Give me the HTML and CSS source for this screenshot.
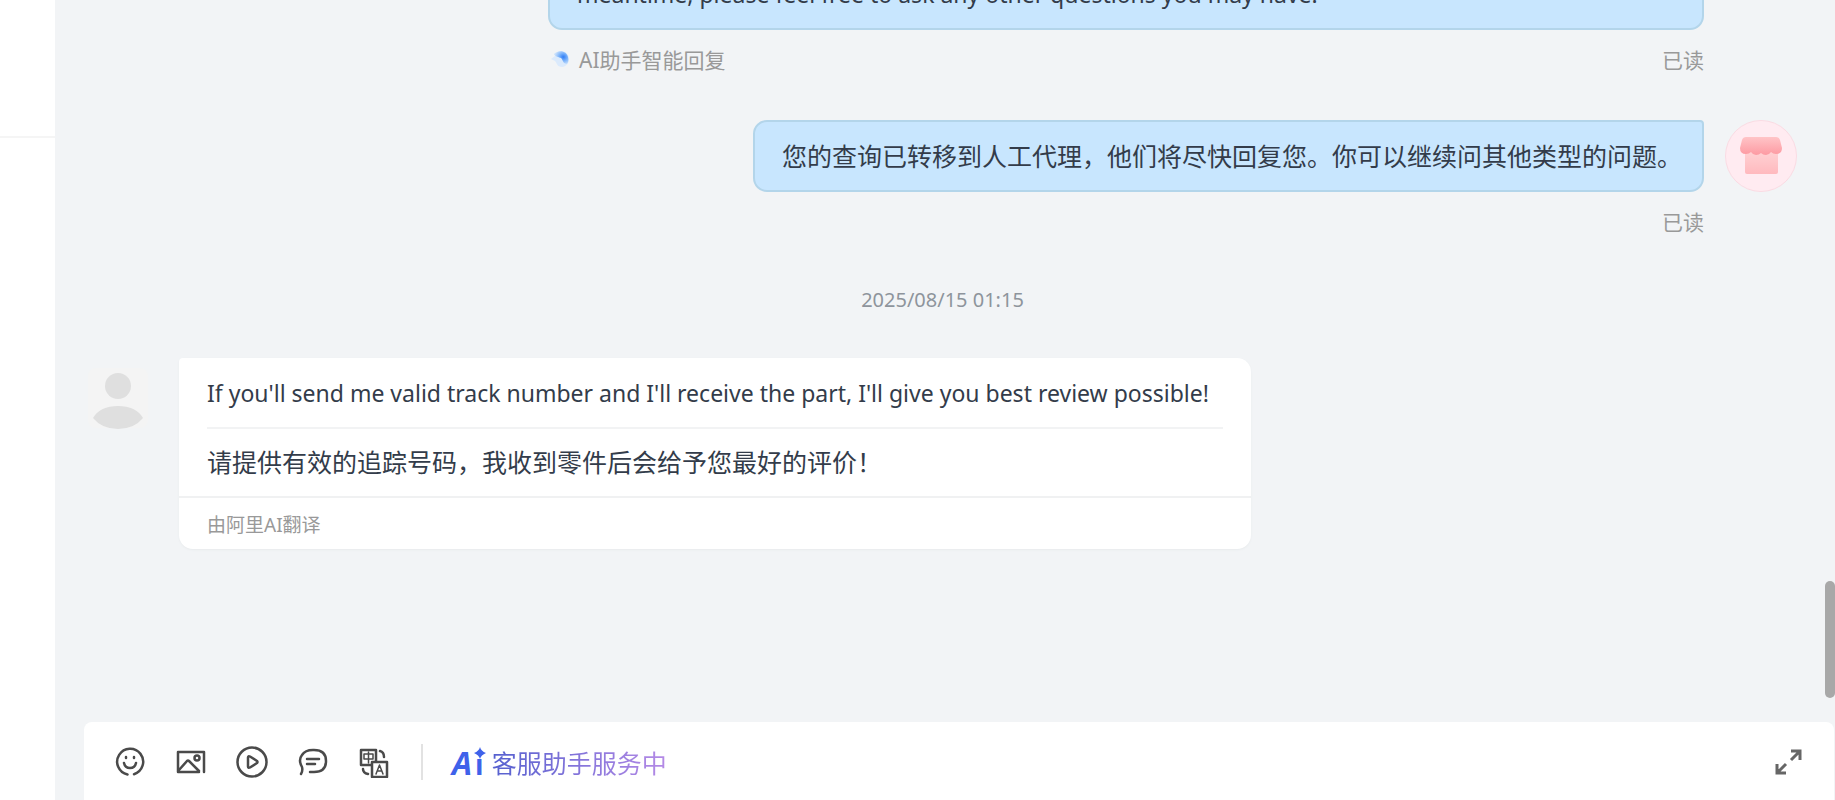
FILE: index.html
```html
<!DOCTYPE html>
<html lang="zh-CN">
<head>
	<meta charset="utf-8">
	<title>客服消息</title>
	<link rel="stylesheet" href="styles.css">
</head>
<body>
	<aside class="sidebar">
		<div class="sidebar_top"></div>
	</aside>

	<main class="chat">
		<section class="messages">
			<div class="msg_out">
				<div class="out_body">
					<div class="bubble bubble_long">meantime, please feel free to ask any other questions you may have.</div>
					<div class="meta">
						<span class="ai_tag">
							<svg class="ai_dot" viewBox="0 0 20 20" aria-hidden="true">
								<defs>
									<radialGradient id="dot" cx="0.65" cy="0.45" r="0.6">
										<stop offset="0" stop-color="#2f7df6"/>
										<stop offset="0.5" stop-color="#7db4fb"/>
										<stop offset="1" stop-color="#c9e0fc"/>
									</radialGradient>
								</defs>
								<path d="M0 10l4-3c0-3 3-5 6-5 5 0 8 4 8 8s-3 8-7 8c-5 0-5-4-7-6z" fill="#dbeafc"/>
								<path d="M3 5c5-5 13-3 14 3 1 3 0 6-1 7-4 0-4-4-6-6-2-1-6-1-7-4z" fill="url(#dot)"/>
							</svg>
							AI助手智能回复
						</span>
						<span class="read">已读</span>
					</div>
				</div>
				<div class="avatar_gap"></div>
			</div>

			<div class="msg_out msg_next">
				<div class="out_body">
					<div class="bubble">您的查询已转移到人工代理，他们将尽快回复您。你可以继续问其他类型的问题。</div>
					<div class="meta"><span class="read">已读</span></div>
				</div>
				<svg class="shop" viewBox="0 0 72 72" aria-label="店铺">
					<defs>
						<linearGradient id="roof" x1="0" y1="0" x2="0" y2="1">
							<stop offset="0" stop-color="#ffc4c7"/>
							<stop offset="1" stop-color="#fd9aa2"/>
						</linearGradient>
						<linearGradient id="wall" x1="0" y1="0" x2="0" y2="1">
							<stop offset="0" stop-color="#ffd3d5"/>
							<stop offset="1" stop-color="#ffb9be"/>
						</linearGradient>
					</defs>
					<circle cx="36" cy="36" r="35.5" fill="#ffebf1" stroke="#fadbe3"/>
					<path d="M20 30h33v22q0 2-2 2H22q-2 0-2-2z" fill="url(#wall)"/>
					<path d="M21 17h30q3 0 4 3l2 8q0 6-6 6-3 0-5-2-2 3-5 3-3 0-5-2-2 2-5 2-3 0-5-3-2 2-5 2-6 0-6-6l2-8q1-3 4-3z" fill="url(#roof)"/>
				</svg>
			</div>

			<div class="time">2025/08/15 01:15</div>

			<div class="msg_in">
				<svg class="person" viewBox="0 0 60 60" aria-label="买家">
					<rect width="60" height="60" rx="8" fill="#f4f4f4"/>
					<circle cx="30" cy="18" r="13" fill="#dfdfdf"/>
					<path d="M5 50Q12 38 30 38T55 50Q46 61 30 61T5 50z" fill="#dfdfdf"/>
				</svg>
				<div class="card">
					<p class="line original">If you'll send me valid track number and I'll receive the part, I'll give you best review possible!</p>
					<p class="line translated">请提供有效的追踪号码，我收到零件后会给予您最好的评价！</p>
					<p class="source">由阿里AI翻译</p>
				</div>
			</div>
			<div class="thumb"></div>
		</section>

		<footer class="composer">
			<button type="button" class="tool" aria-label="表情">
				<svg viewBox="0 0 32 32"><path d="M13.500 28.500A13 13 0 1 1 20 28.200M10 17q1 5 6 5t6-5M12 11v1M20 11v1"/></svg>
			</button>
			<button type="button" class="tool" aria-label="图片">
				<svg viewBox="0 0 32 32"><path d="M29 26V6H3v20h21M4 24l8-9q1-1 2 0l10 10"/><circle cx="22" cy="12" r="2.500"/></svg>
			</button>
			<button type="button" class="tool" aria-label="视频">
				<svg viewBox="0 0 32 32"><circle cx="16" cy="16" r="14.500"/><path d="M12 11.500v9q0 2 2 1l7-4.500q1-1 0-2l-7-4.500q-2-1-2 1z"/></svg>
			</button>
			<button type="button" class="tool" aria-label="快捷短语">
				<svg viewBox="0 0 32 32"><path d="M4 28q2-3 1-7-4-7 0-12 3-5 11-5h1q12 0 12 11T17 26h-4M10 13h12M10 18h8"/></svg>
			</button>
			<button type="button" class="tool" aria-label="翻译">
				<svg viewBox="0 0 32 32"><path d="M13 19H3V4h15v11M14 16h15v15H14z"/><path class="thin" d="M6 8h9v5H6zM10.500 6v11M18 28l3.500-9 3.500 9M19.500 25h4"/><path d="M22 5q4 1 4 6M5 23q0 4 5 5"/></svg>
			</button>
			<span class="divider"></span>
			<a class="assistant" href="#">
				<span class="logo"><i>A</i><span class="logo_i">i</span><svg class="star" viewBox="0 0 12 12" aria-hidden="true"><rect width="12" height="12" fill="#fff"/><path d="M6 0q1 4 6 6-5 2-6 6-1-4-6-6 5-2 6-6z"/></svg></span>
				<span class="assistant_text">客服助手服务中</span>
			</a>
			<button type="button" class="tool expand" aria-label="展开">
				<svg viewBox="0 0 32 32"><path d="M19 5h9v9M28 5L19 14M5 18v9h9M5 27l9-9"/></svg>
			</button>
		</footer>
	</main>
</body>
</html>
```
FILE: styles.css
```css
* {
	box-sizing: border-box;
}
body {
	display: flex;
	height: 100vh;
	margin: 0;
	overflow: hidden;
	background: #f2f4f6;
	color: #333c4a;
	font-family: "Noto Sans", "Noto Sans CJK SC", sans-serif;
	font-size: 25px;
}
p {
	margin: 0;
}
.sidebar {
	flex: 0 0 55px;
	background: #fff;
}
.sidebar_top {
	height: 138px;
	border-bottom: 2px solid #f5f5f5;
}
.chat {
	display: flex;
	flex: 1;
	flex-direction: column;
	min-width: 0;
}
.messages {
	position: relative;
	display: flex;
	flex: 1;
	flex-direction: column;
	min-height: 0;
	padding: 0 38px 0 33px;
}
.msg_out {
	display: flex;
	justify-content: flex-end;
	gap: 21px;
}
.msg_next {
	margin-top: 32px;
}
.bubble {
	padding: 18px 20px 18px 27px;
	border: 2px solid #b3d5ea;
	border-radius: 14px 4px 14px 14px;
	background: #c8e6fe;
	line-height: 32px;
}
/* earlier message, scrolled mostly out of view */
.bubble_long {
	width: 1156px;
	margin-top: -42px;
	font-size: 23px;
}
.meta {
	display: flex;
	align-items: center;
	height: 58px;
	color: #999;
	font-size: 21px;
}
.ai_tag {
	display: flex;
	align-items: center;
	gap: 8px;
	padding-left: 3px;
}
.ai_dot {
	width: 20px;
	height: 20px;
}
.read {
	margin-left: auto;
}
.avatar_gap, .shop {
	flex: 0 0 72px;
	height: 72px;
}
.time {
	margin: 36px 0 44px;
	color: #8e949c;
	font-size: 20px;
	line-height: 28px;
	text-align: center;
}
.msg_in {
	display: flex;
	align-items: flex-start;
	gap: 31px;
}
.person {
	flex: 0 0 60px;
	height: 60px;
	margin-top: 10px;
	overflow: visible;
}
.card {
	border-radius: 4px 14px 14px 14px;
	background: #fff;
	box-shadow: 0 1px 2px #e8ebed;
}
.line {
	height: 69px;
	margin: 0 28px;
	line-height: 70px;
}
.original {
	padding-right: 14px;
	font-size: 23px;
}
.translated {
	border-top: 2px solid #f2f3f4;
	line-height: 66px;
}
.source {
	height: 53px;
	padding: 0 28px;
	border-top: 2px solid #f0f1f2;
	color: #999;
	font-size: 19px;
	line-height: 54px;
}
.thumb {
	position: absolute;
	right: 0;
	bottom: 24px;
	width: 10px;
	height: 117px;
	border-radius: 5px;
	background: #a8a8a8;
}
.composer {
	display: flex;
	align-items: center;
	height: 78px;
	margin: 0 1px 0 29px;
	padding: 2px 30px 0;
	border-radius: 8px 8px 0 0;
	background: #fff;
}
.tool {
	width: 32px;
	height: 32px;
	margin-right: 29px;
	padding: 0;
	border: 0;
	background: none;
}
.tool svg {
	display: block;
	fill: none;
	stroke: #4a4a4a;
	stroke-width: 2.5;
	stroke-linecap: round;
	stroke-linejoin: round;
}
.tool .thin {
	stroke-width: 1.5;
}
.divider {
	width: 2px;
	height: 36px;
	margin: 0 29px 0 2px;
	background: #e2e2e2;
}
.assistant {
	display: flex;
	align-items: center;
	gap: 8px;
	text-decoration: none;
}
.logo {
	position: relative;
	color: #3f62ea;
	font: bold 32px "Open Sans", sans-serif;
}
.logo_i {
	margin-left: 3px;
	font-size: 28px;
}
.star {
	position: absolute;
	top: 6px;
	right: -2px;
	width: 12px;
	height: 12px;
	fill: #3f62ea;
}
.assistant_text {
	background: linear-gradient(90deg, #5560cf, #b58ae6);
	background-clip: text;
	color: transparent;
}
.expand {
	margin: 0 0 0 auto;
}
.expand svg {
	stroke: #666;
	stroke-width: 3;
	stroke-linecap: butt;
	stroke-linejoin: miter;
}
```
